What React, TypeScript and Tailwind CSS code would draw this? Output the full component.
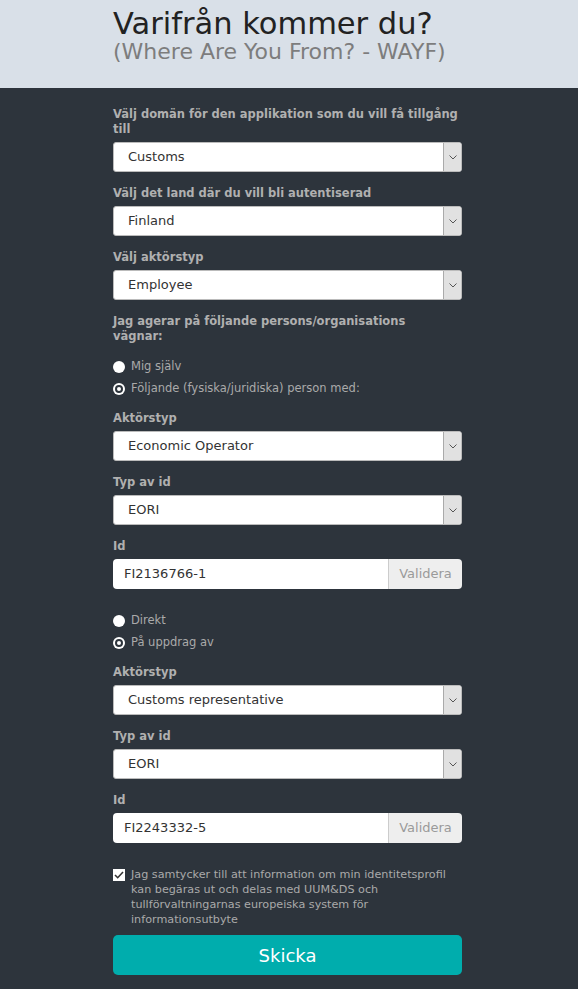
import React from 'react';

const font = { fontFamily: '"DejaVu Sans", Verdana, sans-serif' };

const Label: React.FC<{ children: React.ReactNode }> = ({ children }) => (
  <div className="text-[11.5px] font-bold leading-[15px] text-[#b0b0b0] mb-[5px]">{children}</div>
);

const Select: React.FC<{ value: string }> = ({ value }) => (
  <div className="flex h-[30px] bg-white rounded-[3px] border border-[#bbb] overflow-hidden">
    <div className="flex-1 flex items-center pl-[14px] text-[13px] text-[#333]">{value}</div>
    <div className="w-[18px] bg-[#e1e1e1] border-l border-[#aaa] flex items-center justify-center">
      <svg width="8" height="5" viewBox="0 0 8 5">
        <path d="M0.5 0.5 L4 4 L7.5 0.5" fill="none" stroke="#555" strokeWidth="1" />
      </svg>
    </div>
  </div>
);

const Field: React.FC<{ label: string; value: string }> = ({ label, value }) => (
  <div className="mb-[14px]">
    <Label>{label}</Label>
    <Select value={value} />
  </div>
);

const IdInput: React.FC<{ value: string }> = ({ value }) => (
  <div>
    <Label>Id</Label>
    <div className="flex h-[30px] rounded-[4px] overflow-hidden">
      <div className="flex-1 bg-white flex items-center pl-[11px] text-[13px] text-[#333]">{value}</div>
      <div className="w-[74px] bg-[#eeeeee] border-l border-[#ccc] flex items-center justify-center text-[13px] text-[#9a9a9a]">
        Validera
      </div>
    </div>
  </div>
);

const Radio: React.FC<{ label: string; checked?: boolean }> = ({ label, checked }) => (
  <div className="flex items-center h-[22px] text-[11.5px] text-[#aaa]">
    <span className="w-[12px] h-[12px] rounded-full bg-white flex items-center justify-center mr-[6px]">
      {checked && <span className="w-[8px] h-[8px] rounded-full border-[2px] border-[#2d343c]" />}
    </span>
    {label}
  </div>
);

export default function App() {
  return (
    <div className="min-h-[989px] bg-[#2d343c]" style={font}>
      <div className="bg-[#d9e0e8] h-[88px]">
        <div className="w-[350px] ml-[113px] pt-[7px] whitespace-nowrap">
          <div className="text-[30.5px] leading-[33px] text-[#222]">Varifrån kommer du?</div>
          <div className="text-[22px] leading-[24px] text-[#7d7d7d]">(Where Are You From? - WAYF)</div>
        </div>
      </div>
      <div className="w-[349px] ml-[113px] pt-[19px] pb-[14px]">
        <Field label="Välj domän för den applikation som du vill få tillgång till" value="Customs" />
        <Field label="Välj det land där du vill bli autentiserad" value="Finland" />
        <Field label="Välj aktörstyp" value="Employee" />
        <div className="leading-[16px]">
          <Label>
            Jag agerar på följande persons/organisations
            <br />
            vägnar:
          </Label>
        </div>
        <div className="mt-[12px] mb-[11px]">
          <Radio label="Mig själv" />
          <Radio label="Följande (fysiska/juridiska) person med:" checked />
        </div>
        <Field label="Aktörstyp" value="Economic Operator" />
        <Field label="Typ av id" value="EORI" />
        <IdInput value="FI2136766-1" />
        <div className="mt-[21px] mb-[11px]">
          <Radio label="Direkt" />
          <Radio label="På uppdrag av" checked />
        </div>
        <Field label="Aktörstyp" value="Customs representative" />
        <Field label="Typ av id" value="EORI" />
        <IdInput value="FI2243332-5" />
        <div className="flex mt-[24px] text-[11.2px] leading-[15px] text-[#aaa]">
          <span className="w-[12px] h-[12px] bg-white shrink-0 mt-[2px] mr-[6px] flex items-center justify-center">
            <svg width="10" height="8" viewBox="0 0 10 8">
              <path d="M1 4 L3.7 6.7 L9 1" fill="none" stroke="#333" strokeWidth="1.6" />
            </svg>
          </span>
          <span>
            Jag samtycker till att information om min identitetsprofil kan begäras ut och delas med UUM&amp;DS och
            tullförvaltningarnas europeiska system för informationsutbyte
          </span>
        </div>
        <button className="mt-[8px] w-full h-[40px] rounded-[5px] bg-[#00adad] text-white text-[18px]">Skicka</button>
      </div>
    </div>
  );
}
